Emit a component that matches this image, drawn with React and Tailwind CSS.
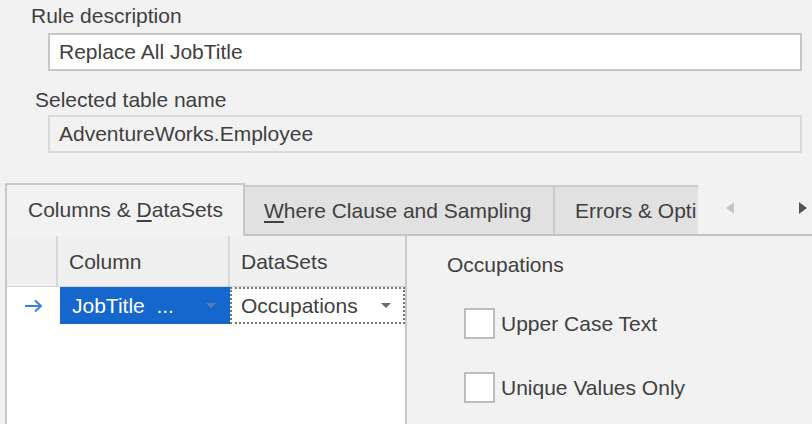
import React from 'react';

/**
 * Dropdown caret used by the grid editors.
 */
function Caret({ className = '' }) {
  return (
    <svg width="10" height="6" viewBox="0 0 10 6" className={className}>
      <path d="M0 0h10L5 5z" fill="currentColor" />
    </svg>
  );
}

function Checkbox({ label }) {
  return (
    <label className="flex items-center gap-[6px]">
      <span className="w-[31px] h-[31px] border-2 border-[#bdbdbd] bg-white" />
      <span>{label}</span>
    </label>
  );
}

export default function App() {
  return (
    <div
      className="w-[812px] h-[424px] bg-[#f2f2f2] overflow-hidden text-[#404040] text-[21px] leading-[26px]"
      style={{ fontFamily: '"Liberation Sans", Arial, sans-serif' }}
    >
      {/* rule description */}
      <div className="pl-[31px] pt-[3px] h-[33px]">Rule description</div>
      <div className="ml-[48px] w-[754px] h-[38px] border-2 border-[#c6c6c6] bg-white pl-[9px] flex items-center">
        Replace All JobTitle
      </div>

      {/* table name */}
      <div className="pl-[35px] pt-[16px] h-[44px]">Selected table name</div>
      <div className="ml-[48px] w-[754px] h-[38px] border-2 border-[#dadada] pl-[9px] flex items-center">
        AdventureWorks.Employee
      </div>

      {/* tabs */}
      <div className="mt-[30px] h-[53px] flex items-end">
        <div className="ml-[5px] w-[240px] h-[53px] border-2 border-b-0 border-[#c8c8c8] bg-[#f2f2f2] flex items-center pl-[21px] pb-[1px] whitespace-nowrap">
          Columns &amp;&nbsp;<span className="underline underline-offset-[3px]">D</span>ataSets
        </div>
        <div className="flex-1 h-[51px] flex items-stretch border-b-2 border-[#c4c4c4]">
          <div className="w-[308px] bg-[#e1e1e1] border-t-2 border-[#cbcbcb] flex items-center pl-[19px] whitespace-nowrap">
            <span className="underline underline-offset-[3px]">W</span>here Clause and Sampling
          </div>
          <div className="w-[145px] bg-[#e1e1e1] border-t-2 border-l-2 border-[#cbcbcb] flex items-center pl-[20px] overflow-hidden whitespace-nowrap">
            Errors &amp; Opti
          </div>
          <div className="flex-1 flex items-center justify-between pl-[28px] pr-[5px] pb-[4px]">
            <svg width="8" height="12" viewBox="0 0 8 12" className="text-[#c6c6c6]">
              <path d="M8 0v12L0 6z" fill="currentColor" />
            </svg>
            <svg width="8" height="12" viewBox="0 0 8 12" className="text-[#555555]">
              <path d="M0 0v12l8-6z" fill="currentColor" />
            </svg>
          </div>
        </div>
      </div>

      {/* tab body */}
      <div className="flex h-[188px]">
        {/* grid */}
        <div className="ml-[5px] w-[402px] border-x-2 border-[#c8c8c8] bg-white flex flex-col">
          <div className="h-[51px] bg-[#f0f0f0] border-b border-[#d4d4d4] flex">
            <div className="w-[51px] border-r-2 border-[#d8d8d8]" />
            <div className="w-[172px] border-r-2 border-[#d8d8d8] pl-[11px] flex items-center pt-[2px]">Column</div>
            <div className="flex-1 pl-[11px] flex items-center pt-[2px]">DataSets</div>
          </div>
          <div className="h-[37px] flex">
            <div className="w-[53px] flex items-center pl-[17px] text-[#3a7fd5]">
              <svg width="20" height="14" viewBox="0 0 20 14">
                <path d="M1 7h16M11 1.5l6 5.5-6 5.5" fill="none" stroke="currentColor" strokeWidth="2" />
              </svg>
            </div>
            <div className="w-[170px] bg-[#1667cd] text-white flex items-center pl-[12px] pr-[14px] justify-between">
              <span>JobTitle&nbsp; ...</span>
              <Caret className="text-[#5a7cae]" />
            </div>
            <div className="flex-1 border-2 border-dotted border-[#777777] bg-white flex items-center pl-[9px] pr-[12px] justify-between">
              <span>Occupations</span>
              <Caret className="text-[#6b6b6b]" />
            </div>
          </div>
        </div>

        {/* options panel */}
        <div className="flex-1 pl-[40px] pt-[16px] flex flex-col">
          <div>Occupations</div>
          <div className="pl-[17px] mt-[30px] flex flex-col gap-[33px]">
            <Checkbox label="Upper Case Text" />
            <Checkbox label="Unique Values Only" />
          </div>
        </div>
      </div>
    </div>
  );
}
